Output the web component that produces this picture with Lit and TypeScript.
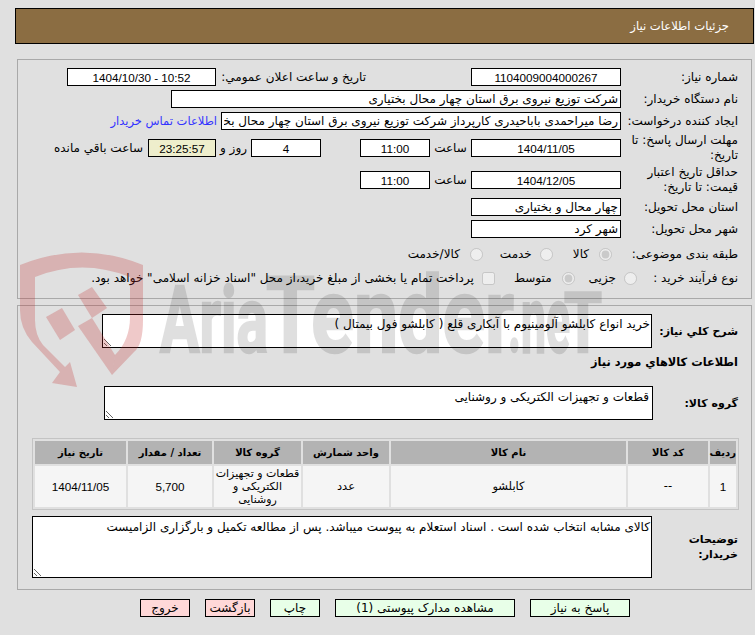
import { LitElement, html, css, svg } from "lit";
import { customElement } from "lit/decorators.js";

const COLS = [91, 84, 87, 86, 235, 80, 26];

@customElement("app-root")
export class AppRoot extends LitElement {
  static styles = css`
    :host { display: block; position: relative; width: 755px; height: 635px; overflow: hidden; background: #e0e0e0; color: #000;
      font-family: "DejaVu Sans", sans-serif; font-size: 12px; direction: rtl; }
    * { box-sizing: border-box; }
    .header { margin: 8px 1px 0 15px; height: 36px; background: #8b6d42; border: 1px solid #000; color: #fff; display: flex; align-items: center; padding-right: 24px; font-size: 11.6px; }
    .panel { border: 1px solid #a9a9a9; width: 735px; margin-left: 17px; margin-right: 3px; padding-right: 13px; }
    .p1 { margin-top: 15px; height: 240px; padding-top: 8px; display: flex; flex-direction: column; gap: 4px; }
    .p2 { margin-top: 6px; height: 285px; padding-top: 8px; }
    .row { display: flex; align-items: center; height: 18px; }
    .h28 { height: 28px; }
    .h24 { height: 24px; }
    .h16 { height: 16px; }
    .lbl { width: 117px; flex: none; line-height: 15px; padding-left: 3px; }
    input[type="text"] { height: 18px; border: 1px solid #000; border-radius: 0; background: #fff; margin: 0; padding: 0 2px; outline: none; font: inherit; color: #000; direction: rtl; flex: none; }
    input[type="text"].c { text-align: center; font-family: "Liberation Sans", "DejaVu Sans", sans-serif; font-size: 11.7px; }
    .w150 { width: 150px; }
    .w149 { width: 149px; }
    .w449 { width: 450px; }
    .w399 { width: 400px; }
    .w70 { width: 70px; }
    .sub { width: 150px; margin-right: 105px; flex: none; white-space: nowrap; }
    .link { color: #3333ff; margin-right: 4px; white-space: nowrap; font-size: 11.5px; }
    .t1 { width: 41px; text-align: center; flex: none; }
    .t2 { width: 39px; flex: none; }
    .t4 { width: 35px; text-align: center; flex: none; }
    input[type="text"].timer { width: 68px; background: #eeeecc; }
    .t3 { margin-right: 5px; white-space: nowrap; }
    .opt { display: flex; align-items: center; flex: none; white-space: nowrap; }
    .opt input { margin: 0; width: 13px; height: 13px; flex: none; }
    .ta { display: block; border: 1px solid #000; border-radius: 0; background: #fff; margin: 0; padding: 2px 1px; font: inherit; color: #000; outline: none; direction: rtl; flex: none; overflow: hidden; }
    .toprow { display: flex; align-items: center; }
    .l2 { width: 86px; flex: none; font-weight: bold; font-size: 11px; line-height: 15px; }
    .ta1 { width: 550px; height: 34px; }
    .section { font-weight: bold; font-size: 11.4px; margin-top: 6px; height: 16px; line-height: 16px; }
    .l3 { width: 85px; flex: none; font-weight: bold; font-size: 11px; line-height: 15px; }
    .ta2 { width: 549px; height: 34px; padding-top: 3px; padding-right: 3px; }
    .gr { margin-top: 16px; }
    table { border-collapse: separate; border-spacing: 2px; border: 1px solid #c4c4c4; margin-top: 18px; margin-right: -1px; width: 707px; table-layout: fixed; text-align: center; }
    th { background: #b3b3b3; height: 23px; padding: 0; font-weight: bold; font-size: 10px; }
    td { background: #f5f5f5; height: 41px; padding: 0 2px; line-height: 13px; font-size: 11.5px; }
    td.wrap { padding: 0 1px; font-size: 11px; }
    td.num { font-family: "Liberation Sans", "DejaVu Sans", sans-serif; font-size: 11.7px; }
    .last { margin-top: 6px; }
    .l4 { width: 86px; flex: none; font-weight: bold; font-size: 11px; line-height: 15px; }
    .ta3 { width: 620px; height: 62px; padding-top: 3px; }
    .buttons { display: flex; margin: 9px 0 0 0; padding-right: 125px; gap: 15px; }
    button { height: 18px; padding: 0; margin: 0; border: 1px solid #000; border-radius: 0; font: inherit; color: #000; background: #e8ffe8; flex: none; }
    button.red { background: #ffd8d8; }
    .b100 { width: 100px; } .b180 { width: 180px; } .b50 { width: 50px; }
    .wm { position: absolute; left: 0; top: 0; width: 755px; height: 635px; pointer-events: none; }
    .wmg { opacity: .12; }
    .wmt { font-family: "Roboto", sans-serif; font-weight: 700; fill: #000; stroke: #000; stroke-width: 2.5px; }
  `;

  watermark() {
    return html`<svg class="wm" viewBox="0 0 755 635" direction="ltr" aria-hidden="true">
      ${svg`<g fill="rgba(190,40,40,.25)">
        <path fill-rule="evenodd" d="M20 265 Q82 240 143 265 L143 320 Q143 345 134 352 L112 375 L115 355 Q130 340 130 317 L130 277 Q82 258 35 277 L35 320 Q35 335 43 345 L65 367 L70 362 L77 387 L52 383 L60 372 L32 342 Q20 328 20 310 Z"/>
        <path d="M112 375 L78 326 L92 318 L115 355 Z"/>
        <path d="M46 317 L62 308 L75 330 L60 340 Z"/>
        <path d="M78 295 L92 287 L107 308 L92 318 Z"/>
      </g>
      <g class="wmg">
      <text class="wmt" x="160" y="352" font-size="92" textLength="108" lengthAdjust="spacingAndGlyphs">Aria</text>
      <text class="wmt" x="266" y="352" font-size="105" textLength="248" lengthAdjust="spacingAndGlyphs">Tender</text>
      <text class="wmt" x="508" y="352" font-size="92" textLength="62" lengthAdjust="spacingAndGlyphs">.ne</text>
      <text class="wmt" x="564" y="352" font-size="84" textLength="38" lengthAdjust="spacingAndGlyphs">T</text>
      </g>`}
    </svg>`;
  }

  render() {
    const hdr = ["ردیف", "کد کالا", "نام کالا", "واحد شمارش", "گروه کالا", "تعداد / مقدار", "تاریخ نیاز"];
    const w = [...COLS].reverse();
    return html`
      <div class="header">جزئیات اطلاعات نیاز</div>
      <div class="panel p1">
        <div class="row">
          <div class="lbl">شماره نیاز:</div>
          <input type="text" class="c w150" readonly value="1104009004000267" />
          <div class="sub">تاریخ و ساعت اعلان عمومي:</div>
          <input type="text" class="c w149" readonly value="10:52 - 1404/10/30" />
        </div>
        <div class="row">
          <div class="lbl">نام دستگاه خریدار:</div>
          <input type="text" class="w449" readonly value="شرکت توزیع نیروی برق استان چهار محال بختیاری" />
        </div>
        <div class="row">
          <div class="lbl">ایجاد کننده درخواست:</div>
          <input type="text" class="w399" readonly value="رضا میراحمدی باباحیدری کارپرداز شرکت توزیع نیروی برق استان چهار محال بختیاری" />
          <a class="link">اطلاعات تماس خریدار</a>
        </div>
        <div class="row h28">
          <div class="lbl">مهلت ارسال پاسخ: تا تاریخ:</div>
          <input type="text" class="c w150" readonly value="1404/11/05" />
          <div class="t1">ساعت</div>
          <input type="text" class="c w70" readonly value="11:00" />
          <div class="t2"></div>
          <input type="text" class="c w70" readonly value="4" />
          <div class="t4">روز و</div>
          <input type="text" class="c timer" readonly value="23:25:57" />
          <div class="t3">ساعت باقي مانده</div>
        </div>
        <div class="row h28">
          <div class="lbl">حداقل تاریخ اعتبار قیمت: تا تاریخ:</div>
          <input type="text" class="c w150" readonly value="1404/12/05" />
          <div class="t1">ساعت</div>
          <input type="text" class="c w70" readonly value="11:00" />
        </div>
        <div class="row">
          <div class="lbl">استان محل تحویل:</div>
          <input type="text" class="w150" readonly value="چهار محال و بختیاری" />
        </div>
        <div class="row">
          <div class="lbl">شهر محل تحویل:</div>
          <input type="text" class="w150" readonly value="شهر کرد" />
        </div>
        <div class="row h24">
          <div class="lbl">طبقه بندی موضوعی:</div>
          <label class="opt" style="margin-right:9px"><input type="radio" name="a" disabled checked /><span style="margin-right:10px">کالا</span></label>
          <label class="opt" style="margin-right:20px"><input type="radio" name="a" disabled /><span style="margin-right:8px">خدمت</span></label>
          <label class="opt" style="margin-right:17px"><input type="radio" name="a" disabled /><span style="margin-right:10px">کالا/خدمت</span></label>
        </div>
        <div class="row h16">
          <div class="lbl">نوع فرآیند خرید :</div>
          <label class="opt" style="margin-right:-16px"><input type="radio" name="b" disabled /><span style="margin-right:8px">جزیی</span></label>
          <label class="opt" style="margin-right:14px"><input type="radio" name="b" disabled checked /><span style="margin-right:10px">متوسط</span></label>
          <label class="opt" style="margin-right:19px"><input type="checkbox" disabled /><span style="margin-right:8px">پرداخت تمام یا بخشی از مبلغ خرید،از محل "اسناد خزانه اسلامی" خواهد بود.</span></label>
        </div>
      </div>
      <div class="panel p2">
        <div class="toprow">
          <div class="l2">شرح کلي نیاز:</div>
          <textarea class="ta ta1" readonly>خرید انواع کابلشو آلومینیوم با آبکاری قلع ( کابلشو فول بیمتال )</textarea>
        </div>
        <div class="section">اطلاعات كالاهاي مورد نياز</div>
        <div class="toprow gr">
          <div class="l3">گروه کالا:</div>
          <textarea class="ta ta2" readonly>قطعات و تجهیزات الکتریکی و روشنایی</textarea>
        </div>
        <table>
          <colgroup>${w.map((x) => html`<col style="width:${x}px" />`)}</colgroup>
          <thead><tr>${hdr.map((h) => html`<th>${h}</th>`)}</tr></thead>
          <tbody><tr>
            <td class="num">1</td><td>--</td><td>کابلشو</td><td>عدد</td>
            <td class="wrap">قطعات و تجهیزات الکتریکی و روشنایی</td>
            <td class="num">5,700</td><td class="num">1404/11/05</td>
          </tr></tbody>
        </table>
        <div class="toprow last">
          <div class="l4">توضیحات خریدار:</div>
          <textarea class="ta ta3" readonly>کالای مشابه انتخاب شده است . اسناد استعلام به پیوست میباشد. پس از مطالعه تکمیل و بارگزاری الزامیست</textarea>
        </div>
      </div>
      <div class="buttons">
        <button class="b100">پاسخ به نیاز</button>
        <button class="b180">مشاهده مدارک پیوستی (1)</button>
        <button class="b50">چاپ</button>
        <button class="b50 red">بازگشت</button>
        <button class="b50 red">خروج</button>
      </div>
      ${this.watermark()}
    `;
  }
}
